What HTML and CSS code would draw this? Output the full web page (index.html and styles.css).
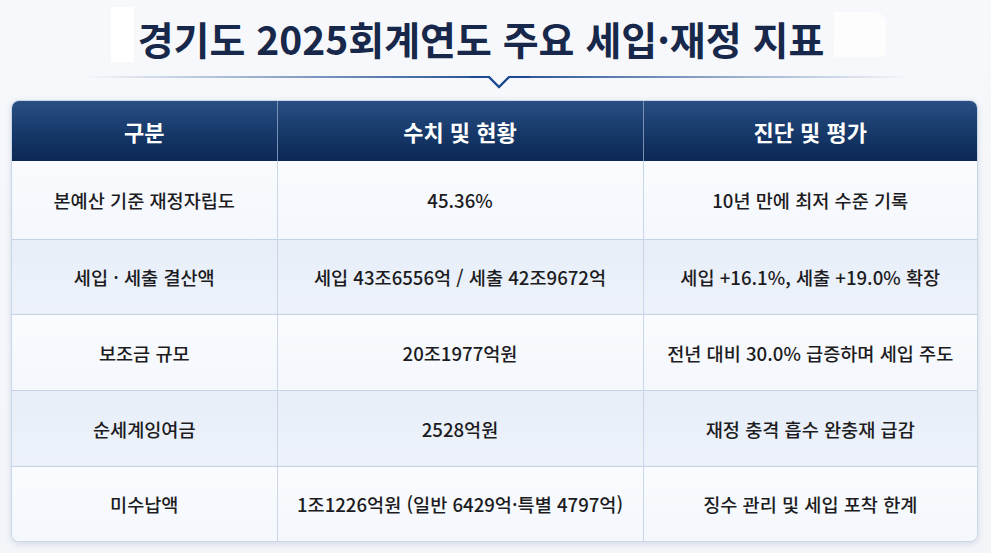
FILE: index.html
```html
<!DOCTYPE html>
<html lang="ko">
<head>
<meta charset="utf-8">
<title>경기도 2025회계연도 주요 세입·재정 지표</title>
<link rel="stylesheet" href="styles.css">
</head>
<body>
<div class="page">
  <header class="title-wrap">
    <span class="patch patch-left"></span>
    <h1 class="title">경기도 2025회계연도 주요 세입·재정 지표</h1>
    <span class="patch patch-right"></span>
  </header>
  <div class="divider">
    <svg width="991" height="30" viewBox="0 0 991 30">
      <defs>
        <linearGradient id="lg" x1="0" x2="1" y1="0" y2="0">
          <stop offset="0" stop-color="#1d4b8f" stop-opacity="0"/>
          <stop offset="0.3" stop-color="#1d4b8f" stop-opacity="0.6"/>
          <stop offset="0.5" stop-color="#1d4b8f" stop-opacity="1"/>
          <stop offset="0.7" stop-color="#1d4b8f" stop-opacity="0.6"/>
          <stop offset="1" stop-color="#1d4b8f" stop-opacity="0"/>
        </linearGradient>
      </defs>
      <path d="M85 15 H489 L499 25 L509 15 H910" fill="none" stroke="url(#lg)" stroke-width="2"/>
      <path d="M470 15 H489 L499 25 L509 15 H530" fill="none" stroke="#1d4b8f" stroke-width="2"/>
    </svg>
  </div>
  <div class="card">
    <table class="grid">
      <colgroup>
        <col class="c1"><col class="c2"><col class="c3">
      </colgroup>
      <thead>
        <tr><th>구분</th><th>수치 및 현황</th><th>진단 및 평가</th></tr>
      </thead>
      <tbody>
        <tr class="r1"><td>본예산 기준 재정자립도</td><td>45.36%</td><td>10년 만에 최저 수준 기록</td></tr>
        <tr class="r2 alt"><td>세입 · 세출 결산액</td><td>세입 43조6556억 / 세출 42조9672억</td><td>세입 +16.1%, 세출 +19.0% 확장</td></tr>
        <tr class="r3"><td>보조금 규모</td><td>20조1977억원</td><td>전년 대비 30.0% 급증하며 세입 주도</td></tr>
        <tr class="r4 alt"><td>순세계잉여금</td><td>2528억원</td><td>재정 충격 흡수 완충재 급감</td></tr>
        <tr class="r5"><td>미수납액</td><td>1조1226억원 (일반 6429억·특별 4797억)</td><td>징수 관리 및 세입 포착 한계</td></tr>
      </tbody>
    </table>
  </div>
</div>
</body>
</html>
```
FILE: styles.css
```css
* { box-sizing: border-box; }
html, body { margin: 0; padding: 0; }
body {
  width: 991px;
  height: 553px;
  overflow: hidden;
  background: linear-gradient(180deg, #f6f8fb 0%, #f3f5f9 100%);
  font-family: "Noto Sans CJK KR", "Noto Sans", sans-serif;
  color: #1c1c1f;
}
.page { display: flex; flex-direction: column; }
.title-wrap {
  height: 68px;
  display: flex;
  align-items: center;
  justify-content: center;
  position: relative;
}
.title {
  margin: 0 29px 0 0;
  font-size: 39px;
  font-weight: 700;
  color: #17284a;
  letter-spacing: 0;
  line-height: 1;
  padding-top: 8px;
}
.patch {
  position: absolute;
  background: #ffffff;
}
.patch-left { left: 111px; top: 7px; width: 23px; height: 55px; }
.patch-right { left: 834px; top: 12px; width: 52px; height: 45px; border-radius: 0 12px 6px 0; opacity: 0.75; }
.divider { height: 32px; display: flex; align-items: flex-start; }
.divider svg { display: block; margin-top: -6px; }
.card {
  margin: 0 13px 0 11px;
  border-radius: 8px;
  overflow: hidden;
  border: 1px solid #c9d6e8;
  box-shadow: 0 2px 6px rgba(40, 70, 120, 0.15);
  background: #f8fafd;
}
.grid {
  width: 100%;
  border-collapse: collapse;
  table-layout: fixed;
}
.c1 { width: 265px; }
.c2 { width: 366px; }
.grid th {
  height: 60px;
  background: linear-gradient(180deg, #2a4f83 0%, #173a6b 50%, #0c2754 100%);
  color: #ffffff;
  font-size: 22px;
  font-weight: 700;
  text-align: center;
  border-left: 1px solid #7a90b2;
}
.grid th:first-child, .grid td:first-child { border-left: none; }
.grid td {
  text-align: center;
  font-size: 18.6px;
  font-weight: 500;
  color: #1c1c22;
  border-left: 1px solid #c9d6e8;
  border-top: 1px solid #c5d3e7;
  background: linear-gradient(180deg, #f9fbfe 0%, #f4f7fc 100%);
}
.grid tr.alt td { background: linear-gradient(180deg, #e7eef8 0%, #edf2fa 100%); }
.grid tbody tr:first-child td { border-top: none; }
.r1 td { height: 78px; }
.r2 td { height: 75px; }
.r3 td { height: 76px; }
.r4 td { height: 76px; }
.r5 td { height: 75px; }
```
